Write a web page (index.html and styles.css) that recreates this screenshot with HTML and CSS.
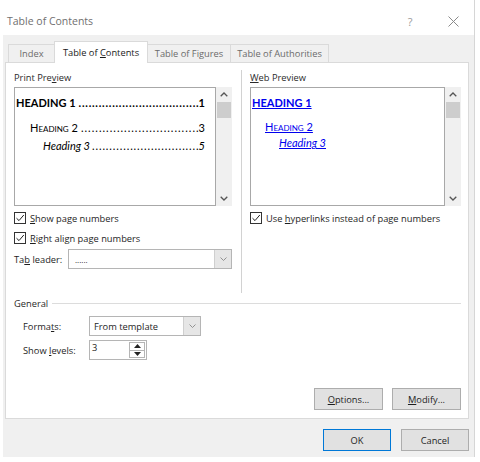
FILE: index.html
```html
<!DOCTYPE html>
<html lang="en">
<head>
    <meta charset="UTF-8">
    <meta name="viewport" content="width=device-width, initial-scale=1.0">
    <title>Table of Contents</title>
    <link rel="stylesheet" href="styles.css">
</head>
<body>
    <div class="dialog">
        <div class="titlebar">
            <span class="title">Table of Contents</span>
            <span class="help">?</span>
            <span class="close">
                <svg width="11" height="11" viewBox="0 0 11 11"><path d="M0.5 0.5L10.5 10.5M10.5 0.5L0.5 10.5" stroke="#8a8a8a" stroke-width="1" fill="none"/></svg>
            </span>
        </div>

        <div class="body">
            <div class="tabs">
                <div class="tab tab-index"><span>Index</span></div>
                <div class="tab tab-toc active"><span>Table of <u>C</u>ontents</span></div>
                <div class="tab tab-tof"><span>Table of Figures</span></div>
                <div class="tab tab-toa"><span>Table of Authorities</span></div>
            </div>

            <div class="panel">
                <div class="columns">
                    <div class="col col-print">
                        <div class="label">Print Pre<u>v</u>iew</div>
                        <div class="preview">
                            <div class="preview-box print">
                                <div class="toc-row h1"><span class="toc-text spaced">HEADING 1</span><span class="leader">. . . . . . . . . . . . . . . . . . . . . . . . . . . . . . . . . . . .</span><span>1</span></div>
                                <div class="toc-row h2"><span class="toc-text spaced">Heading 2</span><span class="leader">. . . . . . . . . . . . . . . . . . . . . . . . . . . . . . . . .</span><span>3</span></div>
                                <div class="toc-row h3"><span class="toc-text">Heading 3</span><span class="leader">. . . . . . . . . . . . . . . . . . . . . . . . . . . . . . .</span><span>5</span></div>
                            </div>
                            <div class="scrollbar">
                                <div class="arrow"><svg width="8" height="5" viewBox="0 0 8 5"><path d="M0.7 4.3L4 1L7.3 4.3" stroke="#555" stroke-width="1.3" fill="none"/></svg></div>
                                <div class="thumb"></div>
                                <div class="track"></div>
                                <div class="arrow"><svg width="8" height="5" viewBox="0 0 8 5"><path d="M0.7 0.7L4 4L7.3 0.7" stroke="#555" stroke-width="1.3" fill="none"/></svg></div>
                            </div>
                        </div>
                        <div class="check-row first">
                            <span class="checkbox"><svg width="10" height="10" viewBox="0 0 10 10"><path d="M1.5 5.2L4 7.6L8.8 2" stroke="#222" stroke-width="1" fill="none"/></svg></span>
                            <span><u>S</u>how page numbers</span>
                        </div>
                        <div class="check-row">
                            <span class="checkbox"><svg width="10" height="10" viewBox="0 0 10 10"><path d="M1.5 5.2L4 7.6L8.8 2" stroke="#222" stroke-width="1" fill="none"/></svg></span>
                            <span><u>R</u>ight align page numbers</span>
                        </div>
                        <div class="field-row leader-row">
                            <span class="field-label">Ta<u>b</u> leader:</span>
                            <div class="select select-leader">
                                <span class="select-value">......</span>
                                <span class="select-btn"><svg width="7" height="4" viewBox="0 0 7 4"><path d="M0.5 0.5L3.5 3.5L6.5 0.5" stroke="#888" stroke-width="0.9" fill="none"/></svg></span>
                            </div>
                        </div>
                    </div>

                    <div class="divider"></div>

                    <div class="col col-web">
                        <div class="label"><u>W</u>eb Preview</div>
                        <div class="preview">
                            <div class="preview-box web">
                                <div class="web-row h1"><span>HEADING 1</span></div>
                                <div class="web-row h2"><span>Heading 2</span></div>
                                <div class="web-row h3"><span>Heading 3</span></div>
                            </div>
                            <div class="scrollbar">
                                <div class="arrow"><svg width="8" height="5" viewBox="0 0 8 5"><path d="M0.7 4.3L4 1L7.3 4.3" stroke="#555" stroke-width="1.3" fill="none"/></svg></div>
                                <div class="thumb"></div>
                                <div class="track"></div>
                                <div class="arrow"><svg width="8" height="5" viewBox="0 0 8 5"><path d="M0.7 0.7L4 4L7.3 0.7" stroke="#555" stroke-width="1.3" fill="none"/></svg></div>
                            </div>
                        </div>
                        <div class="check-row first">
                            <span class="checkbox"><svg width="10" height="10" viewBox="0 0 10 10"><path d="M1.5 5.2L4 7.6L8.8 2" stroke="#222" stroke-width="1" fill="none"/></svg></span>
                            <span>Use <u>h</u>yperlinks instead of page numbers</span>
                        </div>
                    </div>
                </div>

                <div class="general">
                    <div class="group-head">
                        <span>General</span>
                        <span class="group-line"></span>
                    </div>
                    <div class="field-row formats-row">
                        <span class="field-label">Forma<u>t</u>s:</span>
                        <div class="select select-formats">
                            <span class="select-value">From template</span>
                            <span class="select-btn"><svg width="7" height="4" viewBox="0 0 7 4"><path d="M0.5 0.5L3.5 3.5L6.5 0.5" stroke="#888" stroke-width="0.9" fill="none"/></svg></span>
                        </div>
                    </div>
                    <div class="field-row levels-row">
                        <span class="field-label">Show <u>l</u>evels:</span>
                        <div class="spin">
                            <span class="spin-value">3</span>
                            <span class="spin-btns">
                                <span class="spin-btn"><svg width="7" height="4" viewBox="0 0 7 4"><path d="M0 4L3.5 0L7 4Z" fill="#222"/></svg></span>
                                <span class="spin-btn"><svg width="7" height="4" viewBox="0 0 7 4"><path d="M0 0L3.5 4L7 0Z" fill="#222"/></svg></span>
                            </span>
                        </div>
                    </div>
                </div>

                <div class="panel-buttons">
                    <button class="btn"><u>O</u>ptions...</button>
                    <button class="btn"><u>M</u>odify...</button>
                </div>
            </div>

            <div class="footer">
                <button class="btn btn-wide default">OK</button>
                <button class="btn btn-wide">Cancel</button>
            </div>
        </div>
    </div>
</body>
</html>
```

FILE: styles.css
```css
body {
    margin: 0;
    background: #fff;
    font-family: 'Open Sans', 'Noto Sans', sans-serif;
    font-size: 9.3px;
    color: #1e1e1e;
}

u {
    text-decoration-thickness: 1px;
    text-underline-offset: 1px;
}

.dialog {
    margin-left: 3px;
    width: 471px;
    height: 457px;
    border-right: 1px solid #d6d6d6;
    display: flex;
    flex-direction: column;
}

.titlebar {
    height: 35px;
    box-sizing: border-box;
    padding: 7px 0 0 4px;
    display: flex;
    align-items: center;
}

.title {
    font-size: 10.5px;
    color: #707070;
}

.help {
    margin-left: auto;
    width: 10px;
    text-align: center;
    font-size: 11px;
    color: #9a9a9a;
}

.close {
    display: flex;
    margin: 0 15px 0 33px;
}

.body {
    flex: 1;
    background: #f0f0f0;
    padding: 6px 5px 0 2px;
}

/* tabs */
.tabs {
    display: flex;
    align-items: flex-end;
    height: 21px;
    margin-left: 3px;
    position: relative;
    z-index: 1;
}

.tab {
    height: 18px;
    box-sizing: border-box;
    border: 1px solid #dadada;
    border-bottom: none;
    margin-left: -1px;
    display: flex;
    align-items: center;
    justify-content: center;
    color: #6b6b6b;
    background: #f0f0f0;
}

.tab.active {
    height: 22px;
    margin-bottom: -1px;
    background: #fff;
    color: #1a1a1a;
}

.tab-index { width: 47px; margin-left: 0; }
.tab-toc { width: 94px; }
.tab-tof { width: 84px; }
.tab-toa { width: 99px; }

/* panel */
.panel {
    width: 464px;
    height: 357px;
    box-sizing: border-box;
    background: #fff;
    border: 1px solid #dadada;
    padding: 8px 7px 0 8px;
    display: flex;
    flex-direction: column;
}

.columns {
    display: flex;
    height: 222px;
}

.col-print {
    width: 218px;
}

.col-web {
    width: 211px;
}

.divider {
    width: 1px;
    background: #d2d2d2;
    margin: -1px 8px 0 9px;
}

.label {
    height: 14px;
    line-height: 14px;
    margin-bottom: 2px;
    color: #2a2a2a;
}

.preview {
    display: flex;
    height: 119px;
}

.preview-box {
    box-sizing: border-box;
    overflow: hidden;
    border: 1px solid #a8a8a8;
    font-family: Lato, 'Open Sans', sans-serif;
    font-size: 11px;
    color: #000;
}

.preview-box.print {
    width: 202px;
    padding: 8px 10px 0 1px;
}

.preview-box.web {
    width: 195px;
    padding: 8px 0 0 1px;
}

.scrollbar {
    width: 16px;
    background: #f0f0f0;
    display: flex;
    flex-direction: column;
}

.arrow {
    height: 15px;
    display: flex;
    align-items: center;
    justify-content: center;
}

.thumb {
    height: 16px;
    margin: 0 1px;
    background: #cdcdcd;
}

.track {
    flex: 1;
}

.toc-row {
    display: flex;
    line-height: 14px;
    white-space: nowrap;
}

.toc-text {
    padding-right: 2px;
}

.toc-text.spaced {
    padding-right: 3px;
}

/* dots are spread over the free width, like a tab leader */
.leader {
    flex: 1;
    min-width: 0;
    white-space: normal;
    font-style: normal;
    word-spacing: -2px;
    text-align: justify;
    text-align-last: justify;
}

.toc-row.h1 {
    font-weight: bold;
}

.toc-row.h2 {
    font-variant: small-caps;
    padding-left: 14px;
    margin-top: 11px;
}

.toc-row.h3 {
    font-style: italic;
    padding-left: 27px;
    margin-top: 4px;
}

.web-row {
    line-height: 14px;
    color: #0000ee;
    text-decoration: underline;
    text-underline-offset: 1px;
}

.web-row.h1 {
    font-weight: bold;
}

.web-row.h2 {
    font-variant: small-caps;
    padding-left: 13px;
    margin-top: 10px;
}

.web-row.h3 {
    font-style: italic;
    padding-left: 27px;
    margin-top: 2px;
}

.check-row {
    display: flex;
    align-items: center;
    gap: 4px;
    height: 14px;
    margin-top: 6px;
}

.check-row.first {
    margin-top: 5px;
}

.checkbox {
    width: 12px;
    height: 12px;
    box-sizing: border-box;
    border: 1px solid #333;
    display: flex;
    align-items: center;
    justify-content: center;
    background: #fff;
}

.field-row {
    display: flex;
    align-items: center;
    height: 20px;
}

.leader-row {
    margin-top: 4px;
}

.leader-row .field-label {
    width: 54px;
}

.select {
    height: 20px;
    box-sizing: border-box;
    border: 1px solid #b5b5b5;
    display: flex;
    align-items: center;
}

.select-value {
    flex: 1;
    padding-left: 4px;
}

.select-btn {
    width: 16px;
    height: 18px;
    background: #e6e6e6;
    border-left: 1px solid #cfcfcf;
    display: flex;
    align-items: center;
    justify-content: center;
}

.select-leader {
    width: 164px;
}

.select-leader .select-value {
    font-size: 8px;
    padding-left: 6px;
}

/* general */
.general {
    margin-top: 3px;
}

.group-head {
    display: flex;
    align-items: center;
    height: 14px;
    color: #2a2a2a;
}

.group-line {
    flex: 1;
    height: 1px;
    background: #dcdcdc;
    margin-left: 4px;
}

.general .field-label {
    width: 66px;
    padding-left: 9px;
}

.formats-row {
    margin-top: 6px;
}

.levels-row {
    margin-top: 4px;
}

.select-formats {
    width: 112px;
}

.spin {
    width: 58px;
    height: 20px;
    box-sizing: border-box;
    border: 1px solid #b5b5b5;
    display: flex;
}

.spin-value {
    flex: 1;
    padding-left: 2px;
    line-height: 14px;
}

.spin-btns {
    width: 14px;
    display: flex;
    flex-direction: column;
    margin: 1px 1px 1px 0;
    border: 1px solid #b5b5b5;
}

.spin-btn {
    flex: 1;
    display: flex;
    align-items: center;
    justify-content: center;
}

.spin-btn + .spin-btn {
    border-top: 1px solid #b5b5b5;
}

/* buttons */
.panel-buttons {
    margin-top: auto;
    margin-bottom: 8px;
    display: flex;
    justify-content: flex-end;
    gap: 9px;
}

.btn {
    width: 69px;
    height: 22px;
    box-sizing: border-box;
    border: 1px solid #adadad;
    background: #e1e1e1;
    font-family: inherit;
    font-size: 9.3px;
    color: #1e1e1e;
    padding: 0;
}

.footer {
    display: flex;
    justify-content: flex-end;
    gap: 10px;
    padding-top: 10px;
}

.btn-wide {
    width: 68px;
}

.btn.default {
    border-color: #0078d7;
}
```
